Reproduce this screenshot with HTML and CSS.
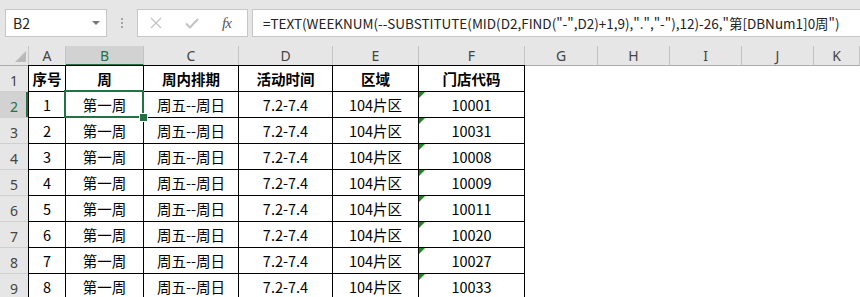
FILE: index.html
```html
<!DOCTYPE html>
<html lang="zh">
<head>
  <meta charset="UTF-8">
  <meta name="viewport" content="width=device-width, initial-scale=1.0">
  <title>活动排期</title>
  <link rel="stylesheet" href="styles.css">
</head>
<body>

  <div class="formula-bar">
    <div class="name-box">
      <span>B2</span>
      <span class="arrow"></span>
    </div>
    <div class="grip"><i></i><i></i><i></i></div>
    <div class="fx-buttons">
      <svg class="icon" width="12" height="12" viewBox="0 0 12 12"><path d="M1 1L11 11M11 1L1 11" stroke="#c3c3c3" stroke-width="1.4" fill="none"/></svg>
      <svg class="icon" width="14" height="11" viewBox="0 0 14 11"><path d="M1 5.5L5 9.5L13 1" stroke="#c3c3c3" stroke-width="2" fill="none"/></svg>
      <span class="fx">fx</span>
    </div>
    <div class="formula">=TEXT(WEEKNUM(--SUBSTITUTE(MID(D2,FIND("-",D2)+1,9),".","-"),12)-26,"第[DBNum1]0周")</div>
  </div>

  <div class="sheet">
    <!-- column headers -->
    <div class="corner"><span class="tri"></span></div>
    <div class="ch first">A</div>
    <div class="ch sel">B</div>
    <div class="ch">C</div>
    <div class="ch">D</div>
    <div class="ch">E</div>
    <div class="ch">F</div>
    <div class="ch">G</div>
    <div class="ch">H</div>
    <div class="ch">I</div>
    <div class="ch">J</div>
    <div class="ch">K</div>

    <div class="rh">1</div>
    <div class="c top first bold">序号</div>
    <div class="c top bold">周</div>
    <div class="c top bold">周内排期</div>
    <div class="c top bold">活动时间</div>
    <div class="c top bold">区域</div>
    <div class="c top bold">门店代码</div>
    <div class="e"></div><div class="e"></div><div class="e"></div><div class="e"></div><div class="e"></div>

    <div class="rh sel">2</div>
    <div class="c first">1</div>
    <div class="c active">第一周</div>
    <div class="c">周五--周日</div>
    <div class="c">7.2-7.4</div>
    <div class="c">104片区</div>
    <div class="c txt">10001</div>
    <div class="e"></div><div class="e"></div><div class="e"></div><div class="e"></div><div class="e"></div>

    <div class="rh">3</div>
    <div class="c first">2</div>
    <div class="c">第一周</div>
    <div class="c">周五--周日</div>
    <div class="c">7.2-7.4</div>
    <div class="c">104片区</div>
    <div class="c txt">10031</div>
    <div class="e"></div><div class="e"></div><div class="e"></div><div class="e"></div><div class="e"></div>

    <div class="rh">4</div>
    <div class="c first">3</div>
    <div class="c">第一周</div>
    <div class="c">周五--周日</div>
    <div class="c">7.2-7.4</div>
    <div class="c">104片区</div>
    <div class="c txt">10008</div>
    <div class="e"></div><div class="e"></div><div class="e"></div><div class="e"></div><div class="e"></div>

    <div class="rh">5</div>
    <div class="c first">4</div>
    <div class="c">第一周</div>
    <div class="c">周五--周日</div>
    <div class="c">7.2-7.4</div>
    <div class="c">104片区</div>
    <div class="c txt">10009</div>
    <div class="e"></div><div class="e"></div><div class="e"></div><div class="e"></div><div class="e"></div>

    <div class="rh">6</div>
    <div class="c first">5</div>
    <div class="c">第一周</div>
    <div class="c">周五--周日</div>
    <div class="c">7.2-7.4</div>
    <div class="c">104片区</div>
    <div class="c txt">10011</div>
    <div class="e"></div><div class="e"></div><div class="e"></div><div class="e"></div><div class="e"></div>

    <div class="rh">7</div>
    <div class="c first">6</div>
    <div class="c">第一周</div>
    <div class="c">周五--周日</div>
    <div class="c">7.2-7.4</div>
    <div class="c">104片区</div>
    <div class="c txt">10020</div>
    <div class="e"></div><div class="e"></div><div class="e"></div><div class="e"></div><div class="e"></div>

    <div class="rh">8</div>
    <div class="c first">7</div>
    <div class="c">第一周</div>
    <div class="c">周五--周日</div>
    <div class="c">7.2-7.4</div>
    <div class="c">104片区</div>
    <div class="c txt">10027</div>
    <div class="e"></div><div class="e"></div><div class="e"></div><div class="e"></div><div class="e"></div>

    <div class="rh">9</div>
    <div class="c first">8</div>
    <div class="c">第一周</div>
    <div class="c">周五--周日</div>
    <div class="c">7.2-7.4</div>
    <div class="c">104片区</div>
    <div class="c txt">10033</div>
    <div class="e"></div><div class="e"></div><div class="e"></div><div class="e"></div><div class="e"></div>
  </div>

</body>
</html>
```

FILE: styles.css
```css
* {
  box-sizing: border-box;
}

body {
  margin: 0;
  width: 860px;
  height: 297px;
  overflow: hidden;
  background: white;
  font-family: "Noto Sans CJK SC", "Noto Sans", sans-serif;
  color: #000;
}

/* formula bar */
.formula-bar {
  height: 46px;
  background: #e6e6e6;
  display: flex;
  align-items: flex-start;
  padding-top: 9px;
}

.name-box {
  margin-left: 5px;
  width: 102px;
  height: 28px;
  background: white;
  border: 1px solid #c6c6c6;
  display: flex;
  align-items: center;
  justify-content: space-between;
  padding: 0 6px 0 7px;
  font-size: 14px;
  color: #222;
}

.arrow {
  width: 0;
  height: 0;
  border-left: 4px solid transparent;
  border-right: 4px solid transparent;
  border-top: 4px solid #777;
}

.grip {
  width: 30px;
  height: 28px;
  display: flex;
  flex-direction: column;
  align-items: center;
  justify-content: center;
  gap: 2px;
}

.grip i {
  width: 2px;
  height: 2px;
  background: #a6a6a6;
}

.fx-buttons {
  width: 111px;
  height: 28px;
  background: white;
  border: 1px solid #c6c6c6;
  display: flex;
  align-items: center;
  padding-left: 12px;
  gap: 23px;
}

.fx {
  font-family: "Liberation Serif", serif;
  font-style: italic;
  font-size: 15px;
  color: #555;
  letter-spacing: -1px;
}

.formula {
  margin-left: 4px;
  flex: 1;
  height: 28px;
  background: white;
  border: 1px solid #c6c6c6;
  border-right: none;
  padding-left: 10px;
  font-size: 13.5px;
  line-height: 26px;
  color: #222;
  white-space: nowrap;
  overflow: hidden;
}

/* sheet grid */
.sheet {
  display: grid;
  grid-template-columns: 28px 38px 78px 95px 94px 86px 106px 73px 72px 72px 72px 1fr;
  grid-template-rows: 20px repeat(9, 26px);
}

.corner {
  background: #e6e6e6;
  border-bottom: 1px solid #ababab;
  display: flex;
  align-items: flex-end;
  justify-content: flex-end;
  padding: 0 2px 3px 0;
}

.tri {
  width: 11px;
  height: 11px;
  background: #b9b9b9;
  clip-path: polygon(100% 0, 100% 100%, 0 100%);
}

.ch {
  background: #e6e6e6;
  border-right: 1px solid #c4c4c4;
  border-bottom: 1px solid #ababab;
  display: flex;
  align-items: flex-end;
  justify-content: center;
  font-family: "Noto Sans", sans-serif;
  font-size: 14px;
  line-height: 14px;
  padding-bottom: 2px;
  color: #444;
}

.ch.first {
  border-left: 1px solid #c4c4c4;
}

.ch.sel {
  background: #d2d2d2;
  color: #217346;
  border-bottom: 2px solid #217346;
  padding-bottom: 1px;
}

.rh {
  background: #e6e6e6;
  border-bottom: 1px solid #d0d0d0;
  display: flex;
  align-items: flex-end;
  justify-content: center;
  font-family: "Noto Sans", sans-serif;
  font-size: 14px;
  line-height: 14px;
  padding-bottom: 3px;
  color: #444;
}

.rh.sel {
  background: #d2d2d2;
  color: #217346;
  box-shadow: inset -2px 0 0 #217346;
}

.c {
  border-right: 1px solid #000;
  border-bottom: 1px solid #000;
  display: flex;
  align-items: center;
  justify-content: center;
  font-size: 14.5px;
  position: relative;
}

.c.first {
  border-left: 1px solid #000;
}

.c.top {
  box-shadow: 0 -1px 0 #000;
}

.bold {
  font-weight: bold;
}

/* text-number marker */
.c.txt::before {
  content: "";
  position: absolute;
  top: 0;
  left: 0;
  width: 6px;
  height: 6px;
  background: #1e8a1e;
  clip-path: polygon(0 0, 100% 0, 0 100%);
}

/* active cell */
.c.active::after {
  content: "";
  position: absolute;
  top: -2px;
  left: -2px;
  right: -1px;
  bottom: -1px;
  border: 2px solid #217346;
}

.c.active::before {
  content: "";
  position: absolute;
  right: -5px;
  bottom: -5px;
  width: 7px;
  height: 7px;
  background: #217346;
  border: 1px solid white;
  z-index: 1;
}
```
